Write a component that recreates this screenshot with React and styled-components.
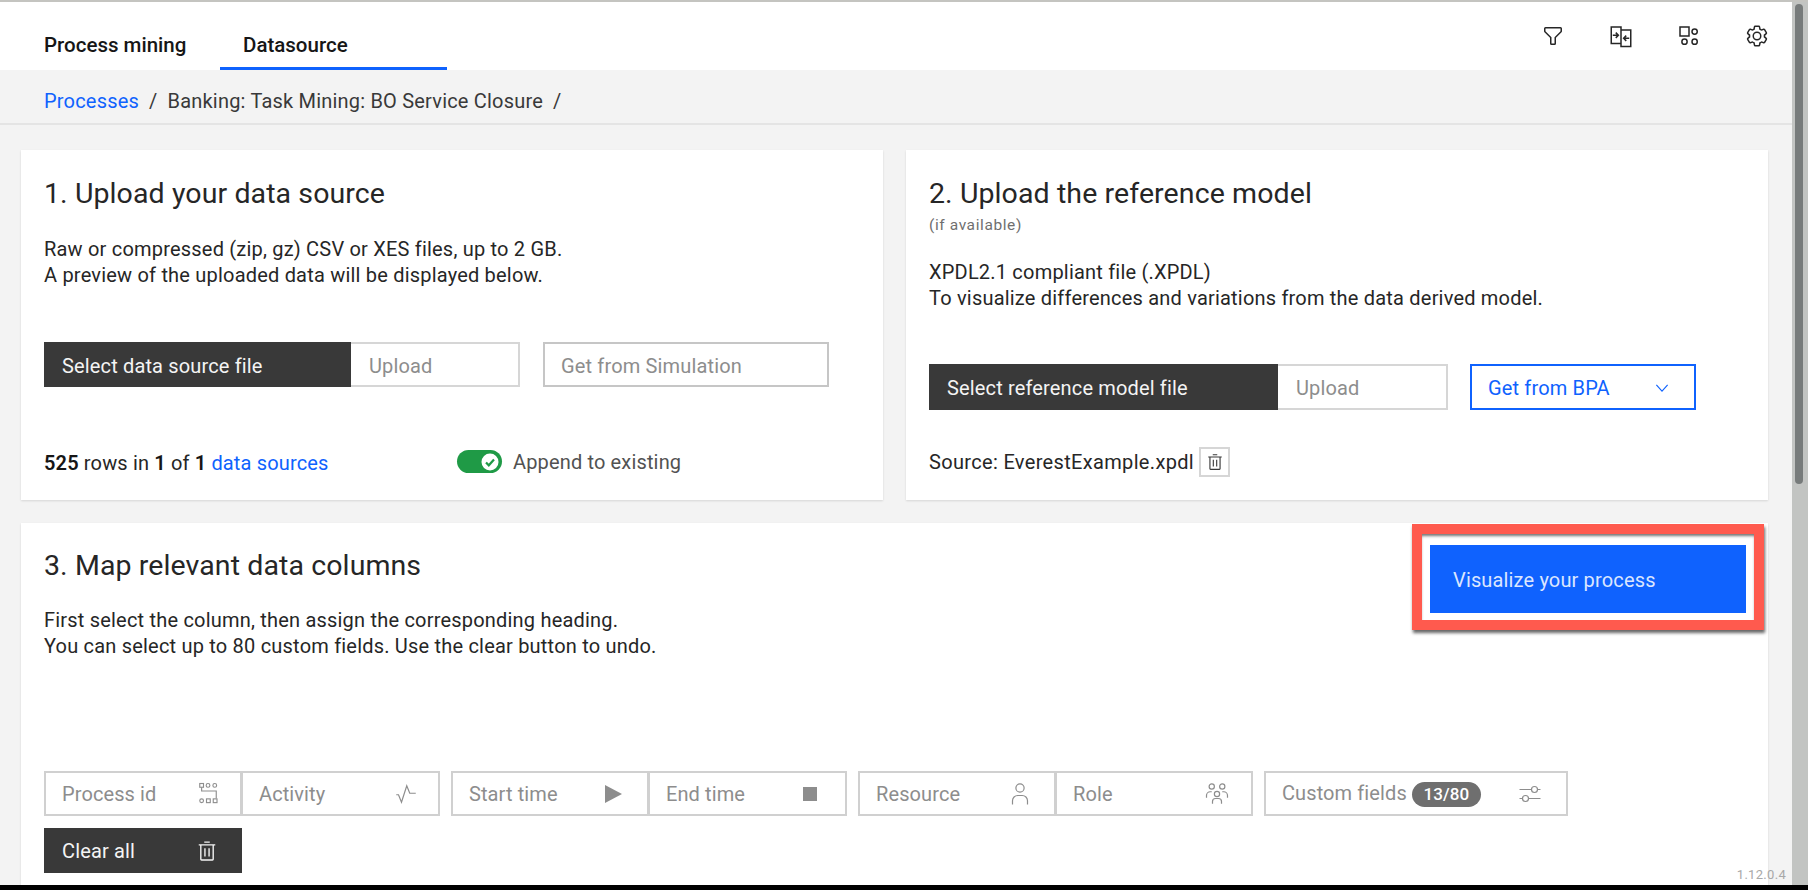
import styled, { createGlobalStyle } from 'styled-components';

const GlobalStyle = createGlobalStyle`
    html, body {
        margin: 0;
        padding: 0;
        height: 100%;
        overflow: hidden;
        background: #f3f3f3;
        font-family: Roboto, "Open Sans", sans-serif;
        color: #262626;
    }
    * { box-sizing: border-box; }
`;

const Page = styled.div`
    width: 1808px;
    height: 890px;
    display: flex;
    flex-direction: column;
    overflow: hidden;
    border-top: 2px solid #c4c4c0;
    border-bottom: 5px solid #000;
`;
const Body = styled.div`
    flex: 1;
    min-height: 0;
    display: flex;
`;
const Content = styled.div`
    position: relative;
    flex: 1;
    min-width: 0;
    overflow: hidden;
`;
const ScrollTrack = styled.div`
    width: 16px;
    background: #c2c4c2;
    padding: 2px 5px 0 3px;
`;
const ScrollThumb = styled.div`
    height: 480px;
    border-radius: 4px;
    background: #777b7b;
`;

const Header = styled.header`
    height: 68px;
    background: #fff;
    display: flex;
    justify-content: space-between;
    padding-left: 21px;
`;
const Tabs = styled.nav`
    display: flex;
`;
const Tab = styled.a`
    width: ${(p) => p.$width}px;
    height: 68px;
    padding: 30px 0 0 23px;
    font-size: 20.500px;
    line-height: 26px;
    font-weight: 500;
    color: #161616;
    border-bottom: 3px solid ${(p) => (p.$active ? '#0f62fe' : 'transparent')};
`;
const HeaderIcons = styled.div`
    display: flex;
    align-items: flex-start;
    padding: 15px 1px 0 0;
`;
const HeaderIcon = styled.button`
    width: 68px;
    height: 38px;
    padding: 0;
    border: 0;
    background: none;
    color: #262626;
    display: flex;
    align-items: center;
    justify-content: center;
`;

const Crumbs = styled.div`
    height: 55px;
    padding: 8px 21px 0 44px;
    display: flex;
    align-items: center;
    gap: 10px;
    font-size: 20px;
    letter-spacing: 0.2px;
    color: #393939;
    border-bottom: 2px solid #e4e4e4;
`;
const BlueLink = styled.a`
    color: #0f62fe;
`;

const Main = styled.main`
    padding: 25px 24px 0 21px;
    display: flex;
    flex-direction: column;
    gap: 23px;
`;
const TopCards = styled.div`
    display: grid;
    grid-template-columns: 862px 862px;
    gap: 23px;
`;
const Card = styled.section`
    position: relative;
    height: ${(p) => p.$height}px;
    padding: ${(p) => p.$top}px 23px 0;
    background: #fff;
    box-shadow: 0 1px 2px rgba(0, 0, 0, 0.12);
`;
const Title = styled.h2`
    margin: 0;
    font-size: 28.500px;
    line-height: 36px;
    letter-spacing: 0.1px;
    font-weight: 400;
    color: #262626;
`;
const Hint = styled.div`
    margin-top: 4px;
    font-size: 15.500px;
    line-height: 18px;
    letter-spacing: 0.6px;
    color: #6f6f6f;
`;
const Desc = styled.p`
    margin: ${(p) => p.$gap}px 0 0;
    font-size: 20px;
    line-height: 26px;
    letter-spacing: 0.2px;
    color: #262626;
`;
const Actions = styled.div`
    margin-top: ${(p) => p.$gap}px;
    height: ${(p) => p.$height}px;
    display: flex;
`;
const DarkButton = styled.button`
    width: ${(p) => p.$width}px;
    height: 100%;
    padding: ${(p) => p.$top ?? 2}px ${(p) => p.$right || 18}px 0 18px;
    border: 0;
    background: #393939;
    color: #f4f4f4;
    font: 400 20px Roboto, sans-serif;
    letter-spacing: 0.15px;
    text-align: left;
    display: flex;
    align-items: center;
    justify-content: space-between;
`;
const GhostButton = styled.button`
    width: ${(p) => p.$width}px;
    height: 100%;
    margin-left: ${(p) => p.$gap || 0}px;
    padding: 2px ${(p) => (p.$gap ? 22 : 18)}px 0 ${(p) => (p.$gap ? 16 : 18)}px;
    background: #fff;
    border: 2px solid ${(p) => p.$border || '#d6d6d6'};
    border-left-width: ${(p) => (p.$gap ? 2 : 0)}px;
    color: ${(p) => p.$color || '#8d8d8d'};
    font: 400 20px Roboto, sans-serif;
    letter-spacing: 0.15px;
    display: flex;
    align-items: center;
    justify-content: space-between;
`;
const StatusRow = styled.div`
    margin-top: 63px;
    height: 26px;
    display: flex;
    align-items: center;
    font-size: 20px;
    letter-spacing: 0.15px;
    color: #262626;
`;
const Stats = styled.div`
    width: 413px;
    b { font-weight: 600; color: #161616; }
`;
const Toggle = styled.div`
    width: 45px;
    height: 23px;
    margin-top: -3px;
    padding-right: 3px;
    border-radius: 12px;
    background: #1f9a46;
    display: flex;
    align-items: center;
    justify-content: flex-end;
`;
const ToggleLabel = styled.span`
    margin: -3px 0 0 11px;
    color: #525252;
`;
const SourceRow = styled.div`
    margin-top: 37px;
    height: 30px;
    display: flex;
    align-items: center;
    gap: 5px;
    font-size: 20px;
    letter-spacing: 0.33px;
`;
const SmallIconButton = styled.button`
    width: 31px;
    height: 30px;
    padding: 0;
    background: #fff;
    border: 2px solid #d6d6d6;
    color: #393939;
    display: flex;
    align-items: center;
    justify-content: center;
`;
const Highlight = styled.div`
    position: absolute;
    top: 1px;
    right: 4px;
    width: 352px;
    height: 106px;
    padding: 11px 8px;
    background: #fff;
    border: 10px solid #ff5a4e;
    box-shadow: 1px 3px 3px rgba(0, 0, 0, 0.6), inset 0 3px 3px -1px rgba(0, 0, 0, 0.55);
`;
const PrimaryButton = styled.button`
    width: 316px;
    height: 68px;
    padding: 2px 23px 0;
    border: 0;
    background: #0f62fe;
    color: #dbe6ff;
    font: 400 20px Roboto, sans-serif;
    letter-spacing: 0.15px;
    text-align: left;
`;
const Fields = styled.div`
    margin-top: 112px;
    display: flex;
    gap: 11px;
`;
const FieldGroup = styled.div`
    display: flex;
`;
const Field = styled.div`
    width: ${(p) => p.$width || 199}px;
    height: 45px;
    margin-left: ${(p) => (p.$joined ? -1 : 0)}px;
    padding: 1px ${(p) => p.$right || 22}px 0 16px;
    border: 2px solid #d0d0d0;
    display: flex;
    align-items: center;
    justify-content: space-between;
    font-size: 20px;
    letter-spacing: 0.1px;
    color: #8d8d8d;
`;
const FieldLabel = styled.span`
    display: flex;
    align-items: center;
    gap: 5px;
    margin-top: -2px;
`;
const Badge = styled.span`
    width: 69px;
    height: 25px;
    margin-top: 2px;
    border-radius: 13px;
    background: #6f6f6f;
    color: #fff;
    font-size: 17px;
    font-weight: 500;
    display: flex;
    align-items: center;
    justify-content: center;
`;
const ClearRow = styled.div`
    margin-top: 12px;
    height: 45px;
`;
const Version = styled.div`
    position: absolute;
    right: 6px;
    bottom: 2px;
    font-size: 13px;
    line-height: 16px;
    letter-spacing: 0.3px;
    color: #a8a8a8;
`;

const CarbonIcon = ({ size = 20, children }) => (
    <svg width={size} height={size} viewBox="0 0 32 32" fill="currentColor">
        {children}
    </svg>
);
const LineIcon = ({ size = 20, weight = 2, children }) => (
    <svg width={size} height={size} viewBox="0 0 32 32" fill="none" stroke="currentColor" strokeWidth={weight}>
        {children}
    </svg>
);

const TrashIcon = ({ size }) => (
    <CarbonIcon size={size}>
        <path d="M12 12h2v12h-2zM18 12h2v12h-2zM4 6v2h2v20a2 2 0 0 0 2 2h16a2 2 0 0 0 2-2V8h2V6zm4 22V8h16v20zM12 2h8v2h-8z" />
    </CarbonIcon>
);
const FilterIcon = () => (
    <CarbonIcon size={24}>
        <path d="M18,28H14a2,2,0,0,1-2-2V18.41L4.59,11A2,2,0,0,1,4,9.59V6A2,2,0,0,1,6,4H26a2,2,0,0,1,2,2V9.59A2,2,0,0,1,27.41,11L20,18.41V26A2,2,0,0,1,18,28ZM6,6V9.59l8,8V26h4V17.59l8-8V6Z" />
    </CarbonIcon>
);
const CompareIcon = () => (
    <LineIcon size={24}>
        <path d="M16 4H3v22h13zM16 8h13v22H16z" />
        <path d="M5 15h7M9 11.500l3.500 3.500L9 18.500M27 19h-7M23 15.500L19.500 19l3.500 3.500" />
    </LineIcon>
);
const AppsIcon = () => (
    <LineIcon size={24}>
        <rect x="4" y="4" width="12" height="12" />
        <circle cx="23.500" cy="10" r="3.500" />
        <circle cx="10" cy="23.500" r="3.500" />
        <circle cx="23.500" cy="23.500" r="3.500" />
    </LineIcon>
);
const SettingsIcon = () => (
    <CarbonIcon size={24}>
        <path d="M27,16.76c0-.25,0-.5,0-.76s0-.51,0-.77l1.92-1.68A2,2,0,0,0,29.3,11L26.94,7a2,2,0,0,0-1.73-1,2,2,0,0,0-.64.1l-2.43.82a11.35,11.35,0,0,0-1.31-.75l-.51-2.52a2,2,0,0,0-2-1.61H13.64a2,2,0,0,0-2,1.61l-.51,2.52a11.48,11.48,0,0,0-1.32.75L7.43,6.06A2,2,0,0,0,6.79,6,2,2,0,0,0,5.06,7L2.7,11a2,2,0,0,0,.41,2.51L5,15.24c0,.25,0,.5,0,.76s0,.51,0,.77L3.11,18.45A2,2,0,0,0,2.7,21L5.06,25a2,2,0,0,0,1.73,1,2,2,0,0,0,.64-.1l2.43-.82a11.35,11.35,0,0,0,1.31.75l.51,2.52a2,2,0,0,0,2,1.61h4.72a2,2,0,0,0,2-1.61l.51-2.52a11.48,11.48,0,0,0,1.32-.75l2.42.82a2,2,0,0,0,.64.1,2,2,0,0,0,1.73-1L29.3,21a2,2,0,0,0-.41-2.51ZM25.21,24l-3.43-1.16a8.86,8.86,0,0,1-2.71,1.57L18.36,28H13.64l-.71-3.55a9.36,9.36,0,0,1-2.7-1.57L6.79,24,4.43,20l2.72-2.4a8.9,8.9,0,0,1,0-3.13L4.43,12,6.79,8l3.43,1.16a8.86,8.86,0,0,1,2.71-1.57L13.64,4h4.72l.71,3.55a9.36,9.36,0,0,1,2.7,1.57L25.21,8,27.57,12l-2.72,2.4a8.9,8.9,0,0,1,0,3.13L27.57,20Z" />
        <path d="M16,22a6,6,0,1,1,6-6A5.94,5.94,0,0,1,16,22Zm0-10a3.91,3.91,0,0,0-4,4,3.91,3.91,0,0,0,4,4,3.91,3.91,0,0,0,4-4A3.91,3.91,0,0,0,16,12Z" />
    </CarbonIcon>
);
const ProcessIdIcon = () => (
    <LineIcon size={24} weight={1.5}>
        <rect x="5" y="2" width="5" height="5" />
        <circle cx="16" cy="4.500" r="2.500" />
        <circle cx="25" cy="4.500" r="2.500" />
        <path d="M7.500 7v5H27v10" />
        <circle cx="7.500" cy="25" r="2.500" />
        <rect x="14" y="22.500" width="5" height="5" />
        <rect x="23" y="22.500" width="5" height="5" />
    </LineIcon>
);
const ActivityIcon = () => (
    <LineIcon size={24} weight={1.6}>
        <path d="M3 17h3l4 10 7-22 4 10h8" />
    </LineIcon>
);
const PlayIcon = () => (
    <svg width="20" height="20" viewBox="0 0 20 20" fill="currentColor">
        <path d="M2 1l17 9-17 9z" />
    </svg>
);
const StopIcon = () => (
    <svg width="16" height="16" viewBox="0 0 16 16" fill="currentColor">
        <rect x="1" y="1" width="14" height="14" />
    </svg>
);
const UserIcon = () => (
    <LineIcon size={24} weight={1.6}>
        <circle cx="16" cy="8" r="5.500" />
        <path d="M6 30v-5a7 7 0 0 1 7-7h6a7 7 0 0 1 7 7v5" />
    </LineIcon>
);
const GroupIcon = () => (
    <LineIcon size={24} weight={1.6}>
        <circle cx="9" cy="6" r="3.500" />
        <circle cx="23" cy="6" r="3.500" />
        <circle cx="16" cy="16" r="3.500" />
        <path d="M10 29v-3a4 4 0 0 1 4-4h4a4 4 0 0 1 4 4v3M2 21v-3a5 5 0 0 1 5-5h2M30 21v-3a5 5 0 0 0-5-5h-2" />
    </LineIcon>
);
const SlidersIcon = () => (
    <LineIcon size={24} weight={1.6}>
        <path d="M2 10h16M26 10h4M2 22h4M14 22h16" />
        <circle cx="22" cy="10" r="4" />
        <circle cx="10" cy="22" r="4" />
    </LineIcon>
);
const ChevronIcon = () => (
    <LineIcon size={20} weight={1.8}>
        <path d="M7 11l9 10 9-10" />
    </LineIcon>
);
const CheckBadge = () => (
    <svg width="18" height="18" viewBox="0 0 18 18">
        <circle cx="9" cy="9" r="8.500" fill="#fff" />
        <path d="M5 9.500l2.800 2.800L13 6.500" fill="none" stroke="#1f9a46" strokeWidth="2.200" />
    </svg>
);

export default function App() {
    return (
        <Page>
            <GlobalStyle />
            <Body>
                <Content>
                    <Header>
                        <Tabs>
                            <Tab $width={199}>Process mining</Tab>
                            <Tab $width={227} $active>Datasource</Tab>
                        </Tabs>
                        <HeaderIcons>
                            <HeaderIcon><FilterIcon /></HeaderIcon>
                            <HeaderIcon><CompareIcon /></HeaderIcon>
                            <HeaderIcon><AppsIcon /></HeaderIcon>
                            <HeaderIcon><SettingsIcon /></HeaderIcon>
                        </HeaderIcons>
                    </Header>
                    <Crumbs>
                        <BlueLink>Processes</BlueLink>
                        <span>/</span>
                        <span>Banking: Task Mining: BO Service Closure</span>
                        <span>/</span>
                    </Crumbs>
                    <Main>
                        <TopCards>
                            <Card $height={350} $top={26}>
                                <Title>1. Upload your data source</Title>
                                <Desc $gap={24}>
                                    Raw or compressed (zip, gz) CSV or XES files, up to 2 GB.<br />
                                    A preview of the uploaded data will be displayed below.
                                </Desc>
                                <Actions $gap={54} $height={45}>
                                    <DarkButton $width={307}>Select data source file</DarkButton>
                                    <GhostButton $width={169}>Upload</GhostButton>
                                    <GhostButton $width={286} $gap={23} $border="#c6c6c6">Get from Simulation</GhostButton>
                                </Actions>
                                <StatusRow>
                                    <Stats>
                                        <b>525</b> rows in <b>1</b> of <b>1</b> <BlueLink>data sources</BlueLink>
                                    </Stats>
                                    <Toggle><CheckBadge /></Toggle>
                                    <ToggleLabel>Append to existing</ToggleLabel>
                                </StatusRow>
                            </Card>
                            <Card $height={350} $top={26}>
                                <Title>2. Upload the reference model</Title>
                                <Hint>(if available)</Hint>
                                <Desc $gap={25}>
                                    XPDL2.1 compliant file (.XPDL)<br />
                                    To visualize differences and variations from the data derived model.
                                </Desc>
                                <Actions $gap={53} $height={46}>
                                    <DarkButton $width={349}>Select reference model file</DarkButton>
                                    <GhostButton $width={170}>Upload</GhostButton>
                                    <GhostButton $width={226} $gap={22} $border="#0f62fe" $color="#0f62fe">
                                        Get from BPA <ChevronIcon />
                                    </GhostButton>
                                </Actions>
                                <SourceRow>
                                    Source: EverestExample.xpdl
                                    <SmallIconButton><TrashIcon size={18} /></SmallIconButton>
                                </SourceRow>
                            </Card>
                        </TopCards>
                        <Card $height={400} $top={25}>
                            <Title>3. Map relevant data columns</Title>
                            <Desc $gap={23}>
                                First select the column, then assign the corresponding heading.<br />
                                You can select up to 80 custom fields. Use the clear button to undo.
                            </Desc>
                            <Highlight>
                                <PrimaryButton>Visualize your process</PrimaryButton>
                            </Highlight>
                            <Fields>
                                <FieldGroup>
                                    <Field $width={198} $right={20}>Process id <ProcessIdIcon /></Field>
                                    <Field $joined $width={199} $right={20}>Activity <ActivityIcon /></Field>
                                </FieldGroup>
                                <FieldGroup>
                                    <Field $width={198} $right={24}>Start time <PlayIcon /></Field>
                                    <Field $joined $width={199} $right={27}>End time <StopIcon /></Field>
                                </FieldGroup>
                                <FieldGroup>
                                    <Field $width={198}>Resource <UserIcon /></Field>
                                    <Field $joined $width={198}>Role <GroupIcon /></Field>
                                </FieldGroup>
                                <Field $width={304} $right={24}>
                                    <FieldLabel>Custom fields <Badge>13/80</Badge></FieldLabel>
                                    <SlidersIcon />
                                </Field>
                            </Fields>
                            <ClearRow>
                                <DarkButton $width={198} $right={24} $top={0}>Clear all <TrashIcon size={22} /></DarkButton>
                            </ClearRow>
                        </Card>
                    </Main>
                    <Version>1.12.0.4</Version>
                </Content>
                <ScrollTrack><ScrollThumb /></ScrollTrack>
            </Body>
        </Page>
    );
}
